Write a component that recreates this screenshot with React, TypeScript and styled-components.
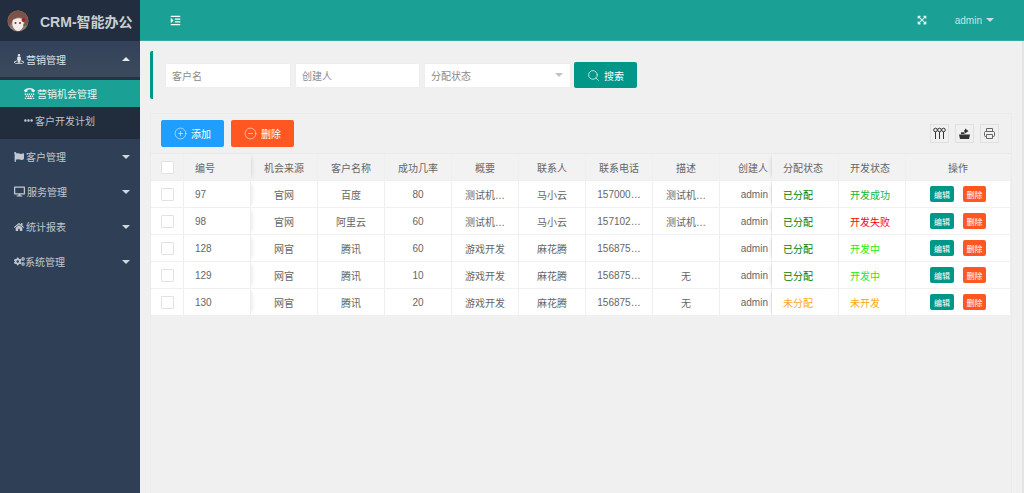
import styled, { createGlobalStyle } from 'styled-components';
import { CirclePlus, CircleMinus, Search } from 'lucide-react';
import {
    FaStreetView, FaTty, FaEllipsisH, FaFlag, FaDesktop, FaHome, FaCogs, FaIndent, FaExpandArrowsAlt,
} from 'react-icons/fa';
import type { ReactNode } from 'react';

const GlobalStyle = createGlobalStyle`
    html, body {
        margin: 0;
        height: 100%;
        overflow: hidden;
    }
    body {
        font-family: "Liberation Sans", "Noto Sans CJK SC", sans-serif;
        font-size: 10px;
        color: #666;
    }
`;

const Page = styled.div`
    display: flex;
    width: 1024px;
    height: 493px;
    overflow: hidden;
    background: #f0f0f0;
`;

const Sidebar = styled.aside`
    width: 140px;
    flex-shrink: 0;
    background: #2f4056;
    display: flex;
    flex-direction: column;
`;

const Brand = styled.div`
    height: 41px;
    background: #222e3f;
    display: flex;
    align-items: center;
    padding-left: 7px;
    gap: 11px;
    color: #c9ced3;
    font-size: 14px;
    font-weight: 700;
    white-space: nowrap;
`;

const MenuItem = styled.div<{ $open?: boolean; $tight?: boolean }>`
    height: ${p => (p.$open ? '36px' : '35px')};
    display: flex;
    align-items: center;
    padding: 0 10px 0 14px;
    gap: ${p => (p.$tight ? '0' : '2px')};
    color: ${p => (p.$open ? '#dfe3e7' : '#c2c8cf')};
    background: ${p => (p.$open ? 'linear-gradient(#33425a, #3b4a5c)' : 'transparent')};
    border-bottom: ${p => (p.$open ? '3px solid #263344' : 'none')};
    svg { flex-shrink: 0; }
`;

const MenuLabel = styled.span`
    flex: 1;
`;

const Caret = styled.i<{ $up?: boolean }>`
    width: 0;
    height: 0;
    border-left: 4px solid transparent;
    border-right: 4px solid transparent;
    border-top: ${p => (p.$up ? 'none' : '4px solid #d3d7dc')};
    border-bottom: ${p => (p.$up ? '4px solid #e8eaed' : 'none')};
`;

const SubMenu = styled.div`
    background: #212d3d;
    padding-bottom: 5px;
`;

const SubItem = styled.div<{ $active?: boolean }>`
    height: 27px;
    display: flex;
    align-items: center;
    gap: 2px;
    padding-left: 24px;
    color: ${p => (p.$active ? '#e8f5f3' : '#bcc2c9')};
    background: ${p => (p.$active ? '#1aa094' : 'transparent')};
`;

const Content = styled.div`
    flex: 1;
    min-width: 0;
    display: flex;
    flex-direction: column;
`;

const Header = styled.header`
    height: 41px;
    flex-shrink: 0;
    background: #1aa094;
    display: flex;
    align-items: center;
    padding: 0 30px;
    color: #fff;
    border-bottom: 1px solid #35ac9f;
    box-sizing: border-box;
`;

const HeaderSpacer = styled.div`
    flex: 1;
`;

const UserName = styled.span`
    display: flex;
    align-items: center;
    gap: 4px;
    margin-left: 28px;
    color: #c4e6e2;
    font-size: 10px;
`;

const Main = styled.main`
    flex: 1;
    min-height: 0;
    padding: 10px 10px 0 10px;
    border-right: 2px solid #e4e4e4;
    display: flex;
    flex-direction: column;
`;

const SearchBar = styled.div`
    height: 48px;
    flex-shrink: 0;
    border-left: 3px solid #009688;
    border-radius: 2px;
    display: flex;
    align-items: center;
    gap: 4px;
    padding-left: 12px;
`;

const Field = styled.div<{ $width: number }>`
    width: ${p => p.$width}px;
    height: 25px;
    box-sizing: border-box;
    background: #fff;
    border: 1px solid #eee;
    display: flex;
    align-items: center;
    justify-content: space-between;
    padding: 0 7px 0 6px;
    color: #8a8a8a;
`;

const SelectArrow = styled.i`
    width: 0;
    height: 0;
    border-left: 4px solid transparent;
    border-right: 4px solid transparent;
    border-top: 4px solid #c2c2c2;
`;

const SearchButton = styled.button`
    width: 63px;
    height: 26px;
    margin-left: -1px;
    border: none;
    border-radius: 2px;
    background: #009688;
    color: #fff;
    font: inherit;
    display: flex;
    align-items: center;
    justify-content: center;
    gap: 4px;
    padding: 0;
`;

const TablePanel = styled.section`
    flex: 1;
    margin-top: 14px;
    border-top: 1px solid #ebebeb;
    border-left: 1px solid #ebebeb;
    border-right: 1px solid #ebebeb;
    display: flex;
    flex-direction: column;
`;

const Toolbar = styled.div`
    height: 40px;
    flex-shrink: 0;
    box-sizing: border-box;
    display: flex;
    align-items: center;
    gap: 7px;
    padding: 0 12px 0 10px;
    border-bottom: 1px solid #e9e9e9;
`;

const ActionButton = styled.button<{ $color: string }>`
    width: 63px;
    height: 27px;
    border: none;
    border-radius: 2px;
    background: ${p => p.$color};
    color: #fff;
    font: inherit;
    display: flex;
    align-items: center;
    justify-content: center;
    gap: 4px;
    padding: 0;
`;

const ToolIcons = styled.div`
    margin-left: auto;
    display: flex;
    gap: 6px;
`;

const ToolIcon = styled.div<{ $color?: string }>`
    width: 19px;
    height: 19px;
    box-sizing: border-box;
    border: 1px solid #e0e0e0;
    display: flex;
    align-items: center;
    justify-content: center;
    color: ${p => p.$color ?? '#333'};
`;

const Row = styled.div<{ $head?: boolean }>`
    display: grid;
    grid-template-columns: 33px repeat(8, 67px) 52px 67px 67px 105px;
    height: ${p => (p.$head ? '27px' : '27.1px')};
    box-sizing: border-box;
    background: ${p => (p.$head ? '#f2f2f2' : '#fff')};
    border-bottom: 1px solid #f0f0f0;
`;

const Cell = styled.div<{ $left?: boolean; $shadow?: 'left' | 'right'; $clip?: boolean; $color?: string }>`
    position: relative;
    z-index: ${p => (p.$shadow ? 1 : 0)};
    display: flex;
    align-items: center;
    justify-content: ${p => (p.$left ? 'flex-start' : p.$clip ? 'flex-end' : 'center')};
    padding: ${p => (p.$left ? '0 0 0 11px' : p.$clip ? '0 3px 0 0' : '0')};
    border-right: 1px solid #efefef;
    color: ${p => p.$color ?? '#666'};
    white-space: nowrap;
    overflow: ${p => (p.$shadow ? 'visible' : 'hidden')};
    background: inherit;
    box-shadow: ${p =>
        p.$shadow === 'right' ? '4px 0 4px -3px rgba(0,0,0,.1)' : p.$shadow === 'left' ? '-4px 0 4px -3px rgba(0,0,0,.1)' : 'none'};
`;

const CheckBox = styled.span`
    width: 13px;
    height: 13px;
    box-sizing: border-box;
    border: 1px solid #e2e2e2;
    border-radius: 1px;
    background: #fff;
`;

const Tag = styled.span<{ $color: string; $width: number }>`
    width: ${p => p.$width}px;
    height: 16px;
    border-radius: 2px;
    background: ${p => p.$color};
    color: #fff;
    font-size: 8px;
    display: flex;
    align-items: center;
    justify-content: center;
`;

const Ops = styled.div`
    display: flex;
    align-items: center;
    gap: 9px;
`;

const Avatar = () => (
    <svg width="22" height="22" viewBox="0 0 22 22">
        <circle cx="11" cy="11" r="10.500" fill="#8d7a78" />
        <path d="M1 12C1 4 6 .5 11 .5S21 4 21 12l-1 4-2-2-1-5-5-2-6 2-2 5-2 2z" fill="#7d5248" />
        <path d="M6 10c3-2 7-2 10-1 1 3 1 6 0 8-1 2-3 4-5 4s-4-2-5-4c-1-2-1-5 0-7z" fill="#f6ece8" />
        <circle cx="8.500" cy="13" r="1" fill="#6b3a3a" />
        <circle cx="13" cy="13" r="1" fill="#6b3a3a" />
        <circle cx="16.500" cy="10" r="2" fill="#9c2530" />
        <circle cx="17.500" cy="15" r="1.200" fill="#4d6a3a" />
    </svg>
);

const ColsIcon = () => (
    <svg width="13" height="13" viewBox="0 0 13 13" fill="none" stroke="currentColor" strokeWidth="1">
        <circle cx="2.500" cy="3" r="1.800" />
        <circle cx="6.500" cy="3" r="1.800" />
        <circle cx="10.500" cy="3" r="1.800" />
        <path d="M2.500 4.800V12M6.500 4.800V12M10.500 4.800V12" />
    </svg>
);

const ExportIcon = () => (
    <svg width="13" height="13" viewBox="0 0 13 13" fill="currentColor">
        <path d="M1 7.500h11l-1 4.500H2z" />
        <path d="M3 5.200h3.500V7H3zM7 3.200V1.500l3.500 2.500L7 6.500V4.800H6V3.200z" />
    </svg>
);

const PrintIcon = () => (
    <svg width="13" height="13" viewBox="0 0 13 13" fill="none" stroke="currentColor" strokeWidth="1">
        <path d="M3.500 4V1.500h6V4M3.500 9.500h-1a1 1 0 0 1-1-1v-3a1 1 0 0 1 1-1h8a1 1 0 0 1 1 1v3a1 1 0 0 1-1 1h-1M3.500 7.500h6v4h-6z" />
    </svg>
);

const menus: { icon: ReactNode; label: string; tight?: boolean }[] = [
    { icon: <FaFlag size={10} />, label: '客户管理' },
    { icon: <FaDesktop size={11} />, label: '服务管理' },
    { icon: <FaHome size={10} />, label: '统计报表' },
    { icon: <FaCogs size={11} />, label: '系统管理', tight: true },
];

const heads = ['编号', '机会来源', '客户名称', '成功几率', '概要', '联系人', '联系电话', '描述', '创建人', '分配状态', '开发状态', '操作'];

const GREEN = '#008000';
const rows = [
    { id: 97, src: '官网', name: '百度', rate: 80, sum: '测试机…', man: '马小云', tel: '157000…', desc: '测试机…', st: '已分配', stc: GREEN, dev: '开发成功', devc: '#13b53c' },
    { id: 98, src: '官网', name: '阿里云', rate: 60, sum: '测试机…', man: '马小云', tel: '157102…', desc: '测试机…', st: '已分配', stc: GREEN, dev: '开发失败', devc: '#ff0000' },
    { id: 128, src: '网官', name: '腾讯', rate: 60, sum: '游戏开发', man: '麻花腾', tel: '156875…', desc: '', st: '已分配', stc: GREEN, dev: '开发中', devc: '#19ee19' },
    { id: 129, src: '网官', name: '腾讯', rate: 10, sum: '游戏开发', man: '麻花腾', tel: '156875…', desc: '无', st: '已分配', stc: GREEN, dev: '开发中', devc: '#19ee19' },
    { id: 130, src: '网官', name: '腾讯', rate: 20, sum: '游戏开发', man: '麻花腾', tel: '156875…', desc: '无', st: '未分配', stc: '#ffa61a', dev: '未开发', devc: '#ffa61a' },
];

const App = () => {
    return (
        <Page>
            <GlobalStyle />
            <Sidebar>
                <Brand>
                    <Avatar />
                    CRM-智能办公
                </Brand>
                <MenuItem $open>
                    <FaStreetView size={10} />
                    <MenuLabel>营销管理</MenuLabel>
                    <Caret $up />
                </MenuItem>
                <SubMenu>
                    <SubItem $active>
                        <FaTty size={11} />
                        营销机会管理
                    </SubItem>
                    <SubItem>
                        <FaEllipsisH size={9} />
                        客户开发计划
                    </SubItem>
                </SubMenu>
                {menus.map(m => (
                    <MenuItem key={m.label} $tight={m.tight}>
                        {m.icon}
                        <MenuLabel>{m.label}</MenuLabel>
                        <Caret />
                    </MenuItem>
                ))}
            </Sidebar>
            <Content>
                <Header>
                    <FaIndent size={11} />
                    <HeaderSpacer />
                    <FaExpandArrowsAlt size={10} color="#d5efec" />
                    <UserName>
                        admin
                        <Caret />
                    </UserName>
                </Header>
                <Main>
                    <SearchBar>
                        <Field $width={126}>客户名</Field>
                        <Field $width={125}>创建人</Field>
                        <Field $width={147}>
                            分配状态
                            <SelectArrow />
                        </Field>
                        <SearchButton>
                            <Search size={13} strokeWidth={1.3} />
                            搜索
                        </SearchButton>
                    </SearchBar>
                    <TablePanel>
                        <Toolbar>
                            <ActionButton $color="#1e9fff">
                                <CirclePlus size={13} strokeWidth={1} />
                                添加
                            </ActionButton>
                            <ActionButton $color="#ff5722">
                                <CircleMinus size={13} strokeWidth={1} />
                                删除
                            </ActionButton>
                            <ToolIcons>
                                <ToolIcon><ColsIcon /></ToolIcon>
                                <ToolIcon><ExportIcon /></ToolIcon>
                                <ToolIcon $color="#666"><PrintIcon /></ToolIcon>
                            </ToolIcons>
                        </Toolbar>
                        <Row $head>
                            <Cell><CheckBox /></Cell>
                            {heads.map((h, i) => (
                                <Cell
                                    key={h}
                                    $left={i === 0 || i === 9 || i === 10}
                                    $shadow={i === 0 ? 'right' : i === 9 ? 'left' : undefined}
                                    $clip={i === 8}
                                >
                                    {h}
                                </Cell>
                            ))}
                        </Row>
                        {rows.map(r => (
                            <Row key={r.id}>
                                <Cell><CheckBox /></Cell>
                                <Cell $left $shadow="right">{r.id}</Cell>
                                <Cell>{r.src}</Cell>
                                <Cell>{r.name}</Cell>
                                <Cell>{r.rate}</Cell>
                                <Cell>{r.sum}</Cell>
                                <Cell>{r.man}</Cell>
                                <Cell>{r.tel}</Cell>
                                <Cell>{r.desc}</Cell>
                                <Cell $clip>admin</Cell>
                                <Cell $left $shadow="left" $color={r.stc}>{r.st}</Cell>
                                <Cell $left $color={r.devc}>{r.dev}</Cell>
                                <Cell>
                                    <Ops>
                                        <Tag $color="#009688" $width={24}>编辑</Tag>
                                        <Tag $color="#ff5722" $width={23}>删除</Tag>
                                    </Ops>
                                </Cell>
                            </Row>
                        ))}
                    </TablePanel>
                </Main>
            </Content>
        </Page>
    );
};

export default App;
